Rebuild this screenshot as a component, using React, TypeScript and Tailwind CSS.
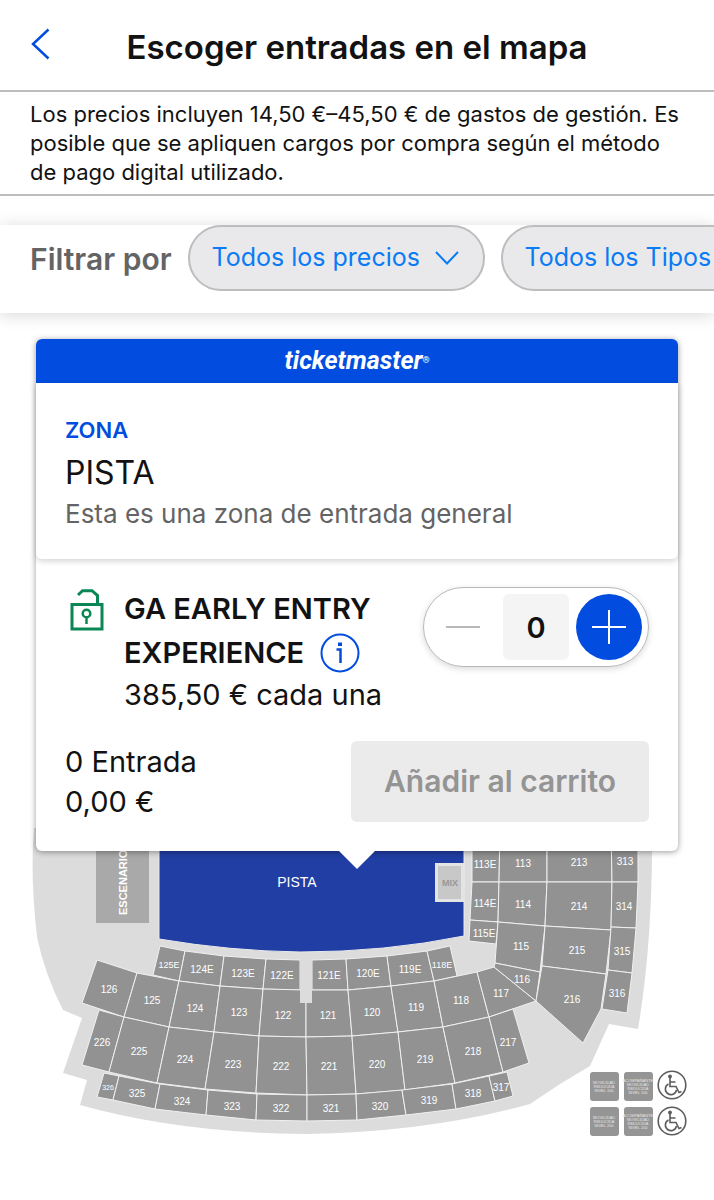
import { useState } from "react";

interface Seat {
  id: string;
  points: string;
  x: number;
  y: number;
  size?: number;
}

const seats: Seat[] = [
  { id: "125E", points: "160,946 185,951 179,981 153,975", x: 169, y: 968, size: 9 },
  { id: "124E", points: "185,951 224,956 220,986 179,981", x: 202, y: 973 },
  { id: "123E", points: "224,956 266,959 263,989 220,986", x: 243, y: 977 },
  { id: "122E", points: "266,959 300,960 300,990 263,989", x: 282, y: 979 },
  { id: "121E", points: "312,960 346,959 348,990 312,990", x: 329, y: 979 },
  { id: "120E", points: "346,959 387,956 391,986 348,990", x: 368, y: 977 },
  { id: "119E", points: "387,956 427,951 434,981 391,986", x: 410, y: 973 },
  { id: "118E", points: "427,951 450,946 457,976 434,981", x: 442, y: 968, size: 9 },
  { id: "126", points: "97,960 137,973 124,1017 82,1003", x: 109, y: 993 },
  { id: "125", points: "137,973 179,981 169,1027 124,1017", x: 152, y: 1004 },
  { id: "124", points: "179,981 220,986 214,1032 169,1027", x: 195, y: 1012 },
  { id: "123", points: "220,986 263,989 259,1036 214,1032", x: 239, y: 1016 },
  { id: "122", points: "263,989 306,990 306,1037 259,1036", x: 283, y: 1019 },
  { id: "121", points: "306,990 348,990 352,1036 306,1037", x: 328, y: 1019 },
  { id: "120", points: "348,990 391,986 398,1032 352,1036", x: 372, y: 1016 },
  { id: "119", points: "391,986 434,981 443,1027 398,1032", x: 416, y: 1011 },
  { id: "118", points: "434,981 477,972 489,1017 443,1027", x: 461, y: 1004 },
  { id: "117", points: "477,972 494,967 536,1001 489,1017", x: 501, y: 997 },
  { id: "226", points: "99,1010 124,1017 109,1072 82,1065", x: 102, y: 1046 },
  { id: "225", points: "124,1017 169,1027 157,1083 109,1072", x: 139, y: 1055 },
  { id: "224", points: "169,1027 214,1032 205,1089 157,1083", x: 185, y: 1063 },
  { id: "223", points: "214,1032 259,1036 256,1093 205,1089", x: 233, y: 1068 },
  { id: "222", points: "259,1036 306,1037 307,1095 256,1093", x: 281, y: 1070 },
  { id: "221", points: "306,1037 352,1036 356,1094 307,1095", x: 329, y: 1070 },
  { id: "220", points: "352,1036 398,1032 405,1090 356,1094", x: 377, y: 1068 },
  { id: "219", points: "398,1032 443,1027 455,1083 405,1090", x: 425, y: 1063 },
  { id: "218", points: "443,1027 489,1017 503,1072 455,1083", x: 473, y: 1055 },
  { id: "217", points: "489,1017 513,1009 529,1063 503,1072", x: 508, y: 1046 },
  { id: "326", points: "104,1073 119,1076 113,1100 97,1097", x: 108, y: 1090, size: 7 },
  { id: "325", points: "119,1076 160,1084 155,1109 113,1100", x: 137, y: 1097 },
  { id: "324", points: "160,1084 208,1090 206,1115 155,1109", x: 182, y: 1105 },
  { id: "323", points: "208,1090 257,1094 256,1120 206,1115", x: 232, y: 1110 },
  { id: "322", points: "257,1094 307,1095 307,1121 256,1120", x: 281, y: 1112 },
  { id: "321", points: "307,1095 356,1094 357,1120 307,1121", x: 331, y: 1112 },
  { id: "320", points: "356,1094 402,1090 406,1115 357,1120", x: 380, y: 1110 },
  { id: "319", points: "402,1090 452,1084 456,1109 406,1115", x: 429, y: 1104 },
  { id: "318", points: "452,1084 489,1076 495,1101 456,1109", x: 473, y: 1097 },
  { id: "317", points: "489,1076 507,1072 513,1096 495,1101", x: 501, y: 1091 },
  { id: "113E", points: "472,828 500,828 499,882 472,882", x: 485, y: 868 },
  { id: "113", points: "500,828 547,828 547,882 499,882", x: 523, y: 867 },
  { id: "213", points: "547,828 611,828 612,882 547,882", x: 579, y: 866 },
  { id: "313", points: "611,828 638,828 638,882 612,882", x: 625, y: 865 },
  { id: "114E", points: "472,882 499,882 498,922 470,920", x: 485, y: 907 },
  { id: "114", points: "499,882 547,882 545,926 498,922", x: 523, y: 908 },
  { id: "214", points: "547,882 612,882 611,930 545,926", x: 579, y: 910 },
  { id: "314", points: "612,882 638,882 636,928 611,927", x: 624, y: 910 },
  { id: "115E", points: "470,920 498,922 496,944 469,941", x: 484, y: 937 },
  { id: "115", points: "498,922 545,926 540,972 495,963", x: 521, y: 950 },
  { id: "215", points: "545,926 611,930 606,974 542,966", x: 577, y: 954 },
  { id: "315", points: "611,927 636,928 632,973 608,970", x: 622, y: 955 },
  { id: "116", points: "495,963 540,972 536,1001 494,967", x: 522, y: 983 },
  { id: "216", points: "542,966 606,974 601,1009 583,1043 536,1001", x: 572, y: 1003 },
  { id: "316", points: "608,970 632,973 627,1013 602,1009", x: 617, y: 997 },
];

const accessible = [
  { x: 590, y: 1072, lines: ["MOVILIDAD", "REDUCIDA", "NIVEL 100"] },
  { x: 624, y: 1072, lines: ["ACOMPAÑANTE", "MOVILIDAD", "REDUCIDA", "NIVEL 100"] },
  { x: 590, y: 1107, lines: ["MOVILIDAD", "REDUCIDA", "NIVEL 200"] },
  { x: 624, y: 1107, lines: ["ACOMPAÑANTE", "MOVILIDAD", "REDUCIDA", "NIVEL 200"] },
];

function Wheelchair({ x, y }: { x: number; y: number }) {
  return (
    <g transform={`translate(${x} ${y})`} fill="none" stroke="#5c5c5c">
      <circle r="13.8" strokeWidth="1.6" fill="#fff" />
      <circle cx="-2" cy="-8.5" r="1.9" fill="#5c5c5c" stroke="none" />
      <path d="M-2-7V1.5H4L7 7.5 9.5 6.5M-2-3H3.5" strokeWidth="1.6" />
      <path d="M-3.5-1A5.6 5.6 0 1 0 4.5 5" strokeWidth="1.6" />
    </g>
  );
}

function VenueMap() {
  return (
    <svg
      viewBox="0 828 714 372"
      className="-mt-[23px] block w-full font-['Liberation_Sans',sans-serif]"
      role="img"
      aria-label="Mapa del recinto"
    >
      <path
        d="M34 828Q30 875 37 937Q45 975 63 1010L82 1018 63 1073 87 1080 80 1105Q180 1133 306 1134Q430 1132 530 1104L560 1084 590 1066 609 1024 638 1029Q653 940 652 828Z"
        fill="#dcdcdc"
      />
      <rect x="96" y="828" width="53" height="95" fill="#a9a9a9" />
      <text
        transform="translate(127 915) rotate(-90)"
        fontSize="11"
        fontWeight="700"
        fill="#fff"
      >
        ESCENARIO
      </text>

      <path
        d="M159 828H464V936Q385 952 300 952Q230 951 159 939Z"
        fill="#203ea3"
        stroke="#ebebeb"
      />
      <rect x="435" y="863" width="30" height="39" fill="#e4e4e4" />
      <rect x="438" y="866" width="23" height="33" fill="#c8c8c8" />
      <text x="450" y="886" fontSize="9" fontWeight="700" fill="#979797" textAnchor="middle">
        MIX
      </text>
      <text x="297" y="887" fontSize="14" fill="#fff" textAnchor="middle">
        PISTA
      </text>

      {seats.map((seat) => (
        <polygon
          key={seat.id}
          points={seat.points}
          fill="#929292"
          stroke="#f0f0f0"
          strokeLinejoin="round"
        />
      ))}
      <rect x="300" y="957" width="12" height="46" fill="#dcdcdc" />
      {seats.map((seat) => (
        <text
          key={seat.id}
          x={seat.x}
          y={seat.y}
          fontSize={seat.size ?? 10}
          fill="#fff"
          textAnchor="middle"
        >
          {seat.id}
        </text>
      ))}

      {accessible.map((box) => (
        <g key={`${box.x}-${box.y}`}>
          <rect x={box.x} y={box.y} width="29" height="29" rx="3" fill="#959595" />
          {box.lines.map((line, i) => (
            <text
              key={line}
              x={box.x + 14}
              y={box.y + 16 + (i - (box.lines.length - 1) / 2) * 4}
              fontSize="4"
              fill="#e4e4e4"
              textAnchor="middle"
            >
              {line}
            </text>
          ))}
        </g>
      ))}
      <Wheelchair x={672} y={1085} />
      <Wheelchair x={672} y={1121} />
    </svg>
  );
}

function FilterSelect({ label }: { label: string }) {
  return (
    <div className="relative shrink-0">
      <select
        aria-label={label}
        className="h-[66px] appearance-none rounded-full border-2 border-[#bdbdbd] bg-[#e9e9eb] pr-[62px] pl-[22px] text-[25px] text-[#0a7bf4]"
      >
        <option>{label}</option>
      </select>
      <svg
        viewBox="0 0 24 14"
        className="pointer-events-none absolute top-[26px] right-[26px] h-[14px] w-6"
        fill="none"
        stroke="#0a7bf4"
        strokeWidth="2"
      >
        <path d="M1 1 12 12.5 23 1" />
      </svg>
    </div>
  );
}

function TicketCard() {
  const [count, setCount] = useState(0);

  return (
    <section className="relative z-10 mx-9 mt-[26px] rounded-md bg-white shadow-[0_1px_6px_rgba(0,0,0,0.4)]">
      <div className="flex h-11 items-center justify-center rounded-t-md bg-[#024ddf] font-[Roboto,sans-serif] text-[25px] font-bold text-white italic">
        ticketmaster<span className="text-[9px] font-normal not-italic">®</span>
      </div>

      <div className="h-[176px] rounded-b-md px-[29px] pt-[31px] shadow-[0_2px_6px_rgba(0,0,0,0.18)]">
        <p className="text-[22px] leading-8 font-semibold text-[#024ddf]">ZONA</p>
        <h2 className="text-[32px] leading-[54px]">PISTA</h2>
        <p className="text-[26px] leading-7 text-[#646464]">
          Esta es una zona de entrada general
        </p>
      </div>

      <div className="flex items-start justify-between pt-[28px] pr-[29px] pl-[34px]">
        <div className="flex gap-5">
          <svg
            viewBox="0 0 34 42"
            className="mt-[2px] h-[42px] w-[34px] shrink-0"
            fill="none"
            stroke="#0a8754"
            strokeWidth="3"
          >
            <path d="M2 15.5H32V40H2ZM27.5 15V6.5L22 1.7H12.5L8 6" />
            <circle cx="16.5" cy="24.5" r="3.8" strokeWidth="2.5" />
            <path d="M16.5 28V35" strokeWidth="2.5" />
          </svg>
          <div className="text-[29px]">
            <h3 className="leading-[44px] font-semibold">
              GA EARLY ENTRY
              <br />
              <span className="flex items-center gap-4">
                EXPERIENCE
                <button type="button" aria-label="Más información">
                  <svg
                    viewBox="0 0 40 40"
                    className="h-10 w-10"
                    fill="none"
                    stroke="#024ddf"
                    strokeWidth="2"
                  >
                    <circle cx="20" cy="20" r="18.5" />
                    <path d="M16.5 16.5H20.5V30" strokeWidth="2.5" />
                    <path d="M20 9.5V13" strokeWidth="4" />
                  </svg>
                </button>
              </span>
            </h3>
            <p className="leading-10">385,50 € cada una</p>
          </div>
        </div>

        <div className="flex h-20 shrink-0 items-center gap-[7px] rounded-full border border-[#b8b8b8] px-[6px] shadow-[0_2px_6px_rgba(0,0,0,0.15)]">
          <button
            type="button"
            aria-label="Quitar entrada"
            disabled={count === 0}
            onClick={() => setCount(count - 1)}
            className="flex h-[66px] w-[66px] items-center justify-center"
          >
            <svg viewBox="0 0 34 34" className="h-[34px] w-[34px]" stroke="#b8b8b8" strokeWidth="2">
              <path d="M0 17H34" />
            </svg>
          </button>
          <input
            type="text"
            readOnly
            value={count}
            aria-label="Número de entradas"
            className="h-[66px] w-[66px] rounded-md bg-[#f4f4f4] text-center text-[29px] font-semibold"
          />
          <button
            type="button"
            aria-label="Añadir entrada"
            onClick={() => setCount(count + 1)}
            className="flex h-[66px] w-[66px] items-center justify-center rounded-full bg-[#024ddf]"
          >
            <svg viewBox="0 0 34 34" className="h-[34px] w-[34px]" stroke="#fff" strokeWidth="2">
              <path d="M0 17H34M17 0V34" />
            </svg>
          </button>
        </div>
      </div>

      <div className="flex items-center justify-between px-[29px] pt-[26px] pb-[29px]">
        <p className="text-[29px] leading-10">
          {count} Entrada
          <br />
          0,00 €
        </p>
        <button
          type="button"
          disabled={count === 0}
          className="h-[81px] w-[298px] rounded-md bg-[#ebebeb] text-[30px] font-semibold text-[#949494]"
        >
          Añadir al carrito
        </button>
      </div>

      <svg
        viewBox="0 0 36 18"
        className="absolute top-full left-1/2 h-[18px] w-9 -translate-x-1/2"
        fill="#fff"
      >
        <path d="M0 0H36L18 18Z" />
      </svg>
    </section>
  );
}

export default function App() {
  return (
    <main className="overflow-hidden bg-white font-[Inter,sans-serif] text-[#121212]">
      <header className="relative flex h-[92px] items-center justify-center border-b-2 border-[#bdbdbd]">
        <button type="button" aria-label="Volver" className="absolute top-[28px] left-[30px]">
          <svg
            viewBox="0 0 20 32"
            className="h-8 w-5"
            fill="none"
            stroke="#024ddf"
            strokeWidth="2.5"
          >
            <path d="M18.5 1.5 3 16 18.5 30.5" />
          </svg>
        </button>
        <h1 className="pt-[6px] text-[33px] font-semibold">Escoger entradas en el mapa</h1>
      </header>

      <p className="border-b-2 border-[#bdbdbd] px-[30px] pt-2 pb-[7px] text-[22px] leading-[29px]">
        Los precios incluyen 14,50 €–45,50 € de gastos de gestión. Es posible que se apliquen
        cargos por compra según el método de pago digital utilizado.
      </p>

      <div className="mt-[29px] flex h-[88px] items-start gap-4 bg-white pl-[30px] shadow-[0_2px_16px_rgba(0,0,0,0.16)]">
        <span className="shrink-0 text-[30px] leading-[68px] font-semibold text-[#646464]">
          Filtrar por
        </span>
        <FilterSelect label="Todos los precios" />
        <FilterSelect label="Todos los Tipos" />
      </div>

      <TicketCard />
      <VenueMap />
    </main>
  );
}
